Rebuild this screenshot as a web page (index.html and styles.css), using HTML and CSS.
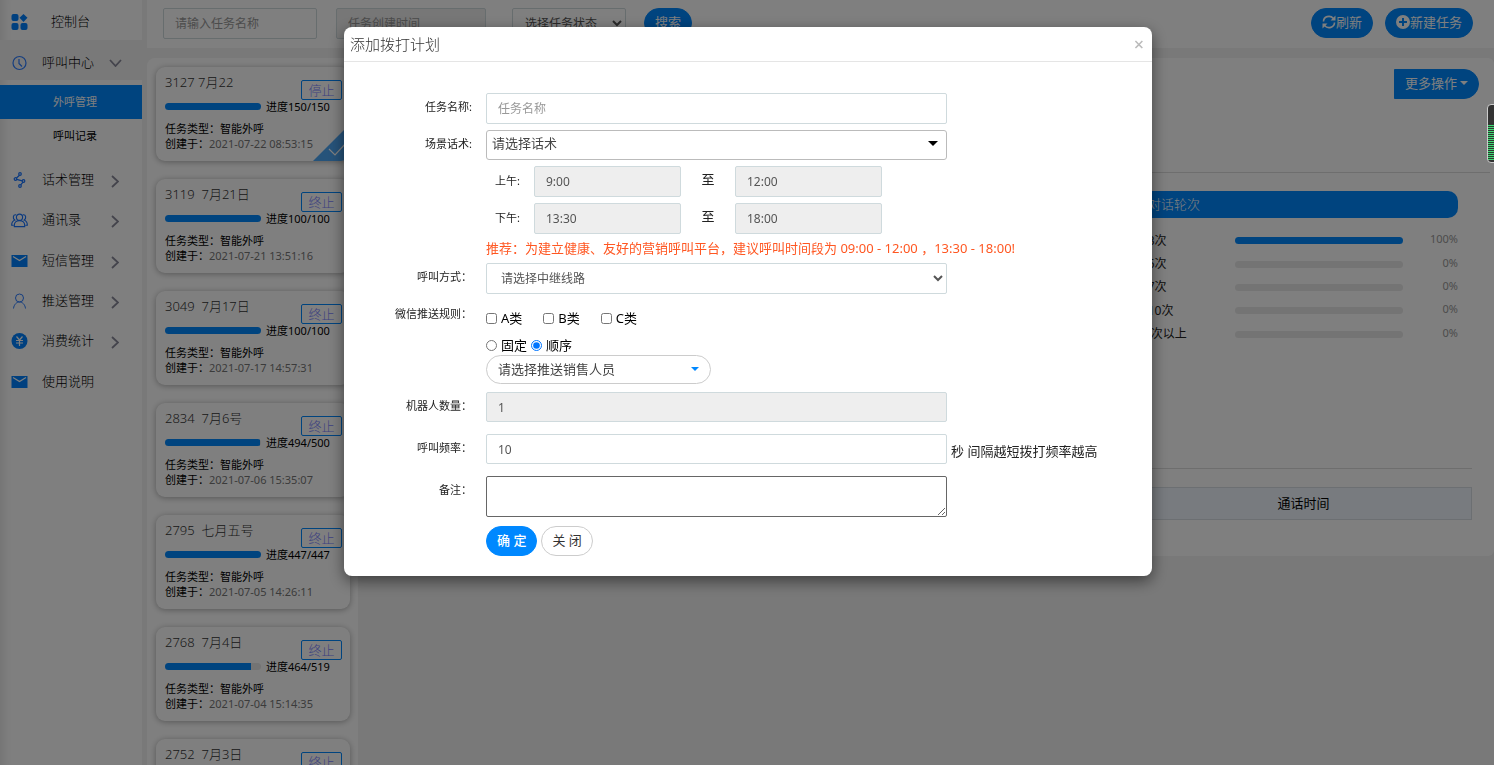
FILE: index.html
```html
<!DOCTYPE html>
<html lang="zh-CN">
<head>
<meta charset="utf-8">
<meta name="viewport" content="width=device-width, initial-scale=1">
<title>外呼管理</title>
<link rel="stylesheet" href="styles.css">
</head>
<body>
<svg class="sprite" aria-hidden="true">
  <symbol id="mail" viewBox="0 0 16 12"><path fill="#0080ff" d="M0 0h16v12H0z"/><path fill="none" stroke="#fff" stroke-width="1.2" d="M1.500 1.500 8 5.500l6.500-4"/></symbol>
  <symbol id="right" viewBox="0 0 8 13"><path fill="none" stroke="#889" stroke-width="1.800" d="m1 1 6 5.500-6 5.500"/></symbol>
</svg>
<div class="app">
  <nav class="sidebar">
    <a class="menu home" href="#"><svg class="icon" viewBox="0 0 16 16" fill="#0080ff"><rect width="7" height="7" rx="2"/><path d="m12 0 4 3.800L12 8 8 3.800z"/><rect y="9" width="7" height="7" rx="2"/><rect x="9" y="9" width="7" height="7" rx="2"/></svg><span>控制台</span></a>
    <a class="menu open" href="#"><svg class="icon" viewBox="0 0 16 16" fill="none" stroke="#2b7cff" stroke-width="1.200"><circle cx="8" cy="8" r="6.500"/><path d="M7.500 4v4.500l3 3"/></svg><span>呼叫中心</span><svg class="chev-down" viewBox="0 0 13 8"><path fill="none" stroke="#889" stroke-width="1.800" d="m1 1 5.500 6L12 1"/></svg></a>
    <div class="submenu">
      <a class="sub active" href="#">外呼管理</a>
      <a class="sub" href="#">呼叫记录</a>
    </div>
    <div class="group">
      <a class="menu" href="#"><svg class="icon" viewBox="0 0 16 16" fill="none" stroke="#1673ff" stroke-width="1.200"><circle cx="8.500" cy="2" r="1.300"/><circle cx="4" cy="7" r="1.300"/><circle cx="12" cy="9" r="1.300"/><circle cx="8.500" cy="14" r="1.300"/><path d="M8 3.200 5 6M5.200 7.300l5.500 1.500M11.500 10.200 9.200 12.800"/></svg><span>话术管理</span><svg class="chev"><use href="#right"/></svg></a>
      <a class="menu" href="#"><svg class="icon wide" viewBox="0 0 18 15" fill="none" stroke="#1673ff" stroke-width="1.200"><circle cx="9" cy="4" r="3.300"/><path d="M3.500 14v-1.500c0-6.500 11-6.500 11 0V14zM5.500 1.500C2 1 1.500 5.500 4 7c-2 .8-3.300 2.500-3.300 5.500h2M12.500 1.500C16 1 16.500 5.500 14 7c2 .8 3.300 2.500 3.300 5.500h-2"/></svg><span>通讯录</span><svg class="chev"><use href="#right"/></svg></a>
      <a class="menu" href="#"><svg class="icon mail"><use href="#mail"/></svg><span>短信管理</span><svg class="chev"><use href="#right"/></svg></a>
      <a class="menu" href="#"><svg class="icon" viewBox="0 0 16 16" fill="none" stroke="#2b7cff"><circle cx="8" cy="5" r="4"/><path d="M2 15.500C2.500 11.500 5 9 8 9s5.500 2.500 6 6.500"/></svg><span>推送管理</span><svg class="chev"><use href="#right"/></svg></a>
      <a class="menu" href="#"><svg class="icon" viewBox="0 0 16 16"><circle cx="8" cy="8" r="8" fill="#0080ff"/><path fill="none" stroke="#fff" stroke-width="1.200" d="m5 3.500 3 3.500 3-3.500M4.500 7.500h7M4.500 10h7M8 7v6"/></svg><span>消费统计</span><svg class="chev"><use href="#right"/></svg></a>
      <a class="menu" href="#"><svg class="icon mail"><use href="#mail"/></svg><span>使用说明</span></a>
    </div>
  </nav>
  <main class="main">
    <header class="topbar">
      <input class="field f-name" type="text" placeholder="请输入任务名称" aria-label="任务名称搜索">
      <input class="field f-date" type="text" placeholder="任务创建时间" aria-label="任务创建时间" readonly>
      <select class="field f-state" aria-label="任务状态"><option>选择任务状态</option></select>
      <button class="btn">搜索</button>
      <div class="actions">
        <button class="btn"><svg class="btn-icon" viewBox="0 0 14 14" fill="none" stroke="#fff" stroke-width="1.600"><path d="M1.500 6.500c0-5 6.500-7 10-3M12.500 7.500c0 5-6.500 7-10 3"/><path fill="#fff" stroke="none" d="M13.500 .5v5h-5zM.5 13.500v-5h5z"/></svg>刷新</button>
        <button class="btn"><svg class="btn-icon" viewBox="0 0 14 14"><circle cx="7" cy="7" r="7" fill="#fff"/><path stroke="#0088ff" stroke-width="2" d="M7 3v8M3 7h8"/></svg>新建任务</button>
      </div>
    </header>
    <div class="content">
      <section class="tasks">
        <article class="card selected">
          <h3>3127 7月22</h3><button class="stop">停止</button>
          <div class="progress"><div class="track"><div class="fill" style="width:100%"></div></div><span>进度150/150</span></div>
          <p>任务类型：智能外呼</p><p>创建于：<time>2021-07-22 08:53:15</time></p>
          <svg class="tick" viewBox="0 0 37 37"><path fill="#4da6f5" d="M37 0v37H0z"/><path fill="none" stroke="#fff" stroke-width="1.200" d="m16 25 6 6 12-13"/></svg>
        </article>
        <article class="card">
          <h3>3119&nbsp; 7月21日</h3><button class="stop">终止</button>
          <div class="progress"><div class="track"><div class="fill" style="width:100%"></div></div><span>进度100/100</span></div>
          <p>任务类型：智能外呼</p><p>创建于：<time>2021-07-21 13:51:16</time></p>
        </article>
        <article class="card">
          <h3>3049&nbsp; 7月17日</h3><button class="stop">终止</button>
          <div class="progress"><div class="track"><div class="fill" style="width:100%"></div></div><span>进度100/100</span></div>
          <p>任务类型：智能外呼</p><p>创建于：<time>2021-07-17 14:57:31</time></p>
        </article>
        <article class="card">
          <h3>2834&nbsp; 7月6号</h3><button class="stop">终止</button>
          <div class="progress"><div class="track"><div class="fill" style="width:98.8%"></div></div><span>进度494/500</span></div>
          <p>任务类型：智能外呼</p><p>创建于：<time>2021-07-06 15:35:07</time></p>
        </article>
        <article class="card">
          <h3>2795&nbsp; 七月五号</h3><button class="stop">终止</button>
          <div class="progress"><div class="track"><div class="fill" style="width:100%"></div></div><span>进度447/447</span></div>
          <p>任务类型：智能外呼</p><p>创建于：<time>2021-07-05 14:26:11</time></p>
        </article>
        <article class="card">
          <h3>2768&nbsp; 7月4日</h3><button class="stop">终止</button>
          <div class="progress"><div class="track"><div class="fill" style="width:89.4%"></div></div><span>进度464/519</span></div>
          <p>任务类型：智能外呼</p><p>创建于：<time>2021-07-04 15:14:35</time></p>
        </article>
        <article class="card">
          <h3>2752&nbsp; 7月3日</h3><button class="stop">终止</button>
        </article>
      </section>
      <section class="detail">
        <div class="detail-head"><button class="btn more">更多操作<i class="caret"></i></button></div>
        <div class="stats">
          <h2>对话轮次</h2>
          <dl>
            <div><dt>1-3次</dt><dd class="track"><div class="fill" style="width:100%"></div></dd><dd class="pct">100%</dd></div>
            <div><dt>4-5次</dt><dd class="track"></dd><dd class="pct">0%</dd></div>
            <div><dt>6-7次</dt><dd class="track"></dd><dd class="pct">0%</dd></div>
            <div><dt>8-10次</dt><dd class="track"></dd><dd class="pct">0%</dd></div>
            <div><dt>10次以上</dt><dd class="track"></dd><dd class="pct">0%</dd></div>
          </dl>
        </div>
        <div class="records">
          <table><thead><tr><td></td><th>通话时间</th></tr></thead></table>
        </div>
      </section>
    </div>
  </main>
</div>

<div class="overlay">
  <div class="modal" role="dialog" aria-labelledby="modal-title">
    <header class="modal-head">
      <h1 id="modal-title">添加拨打计划</h1>
      <button class="close" aria-label="关闭窗口">×</button>
    </header>
    <form class="form">
      <div class="row"><label class="lbl" for="name">任务名称:</label><input class="field full" id="name" type="text" placeholder="任务名称"></div>
      <div class="row"><label class="lbl" for="script">场景话术:</label><button class="picker full" id="script" type="button">请选择话术<i class="caret dark"></i></button></div>
      <div class="row times"><label for="am1">上午:</label><input class="field" id="am1" value="9:00" readonly><label class="to" for="am2">至</label><input class="field" id="am2" value="12:00" readonly></div>
      <div class="row times"><label for="pm1">下午:</label><input class="field" id="pm1" value="13:30" readonly><label class="to" for="pm2">至</label><input class="field" id="pm2" value="18:00" readonly></div>
      <p class="tip">推荐：为建立健康、友好的营销呼叫平台，建议呼叫时间段为 09:00 - 12:00 ，13:30 - 18:00!</p>
      <div class="row"><label class="lbl" for="line">呼叫方式：</label><select class="field full" id="line"><option>请选择中继线路</option></select></div>
      <div class="row rules"><span class="lbl">微信推送规则：</span>
        <div class="push">
          <div class="checks"><label><input type="checkbox">A类</label><label><input type="checkbox">B类</label><label><input type="checkbox">C类</label></div>
          <div class="radios"><label><input type="radio" name="order">固定</label><label><input type="radio" name="order" checked>顺序</label></div>
          <button class="pill" type="button">请选择推送销售人员<i class="caret blue"></i></button>
        </div>
      </div>
      <div class="row loose"><label class="lbl" for="robots">机器人数量：</label><input class="field full" id="robots" value="1" readonly></div>
      <div class="row loose"><label class="lbl" for="rate">呼叫频率：</label><input class="field full" id="rate" value="10"><span class="note">秒 间隔越短拨打频率越高</span></div>
      <div class="row memo"><label class="lbl" for="memo">备注：</label><textarea class="full" id="memo"></textarea></div>
      <div class="buttons"><button class="btn ok" type="button">确 定</button><button class="btn cancel" type="button">关 闭</button></div>
    </form>
  </div>
</div>
<div class="meter"></div>
</body>
</html>
```

FILE: styles.css
```css
* { box-sizing: border-box; }
body, h1, h2, h3, p, dl, dd { margin: 0; }
body {
  height: 100vh;
  overflow: hidden;
  background: #f2f2f2;
  color: #222;
  font: 400 13px/20px "Noto Sans", "Noto Sans CJK SC", sans-serif;
}
button, input, select, textarea { font: inherit; color: inherit; }
button { padding: 0; cursor: pointer; }
a { color: inherit; text-decoration: none; }
.sprite { position: absolute; width: 0; height: 0; }

.app { display: flex; gap: 5px; height: 100vh; }

/* sidebar */
.sidebar {
  flex: 0 0 142px;
  background: #fff;
  box-shadow: inset 12px 0 12px -10px rgba(0, 0, 0, .12);
}
.menu { display: flex; align-items: center; height: 40px; padding: 0 23px 0 11px; font-weight: 300; }
.menu span { flex: 1; margin-left: 14px; padding-bottom: 2px; color: #000; white-space: nowrap; }
.home { padding-top: 4px; }
.home span { margin-left: 23px; }
.icon { flex: none; width: 17px; height: 16px; }
.wide { height: 15px; }
.icon.mail { height: 12px; }
.chev { width: 8px; height: 13px; margin-top: 3px; }
.chev-down { width: 13px; height: 8px; margin-right: -3px; }
.open { background: #f2f2f2; padding-top: 6px; }
.submenu { padding: 5px 0 7px; }
.sub { display: block; padding-left: 53px; font-size: 11px; line-height: 34px; color: #000; }
.sub.active { background: #0088ff; color: #fff; }
.group { display: grid; grid-auto-rows: 1fr; height: 242px; }
.group .menu { height: auto; }

/* shared controls */
.field {
  height: 31px;
  padding: 0 11px;
  border: 1px solid #cfdadd;
  border-radius: 2px;
  background: #fff;
  color: #555;
  font-size: 12px;
  outline: none;
}
.field:read-only:not(select) { background: #eee; }
.field::placeholder { color: #999; opacity: 1; }
.btn {
  display: inline-flex;
  align-items: center;
  justify-content: center;
  height: 30px;
  padding: 0 10px 2px;
  border: 1px solid #0088ff;
  border-radius: 15px;
  background: #0088ff;
  color: #fff;
  white-space: nowrap;
}
.btn-icon { width: 14px; height: 14px; }
.caret { border: 4px solid transparent; border-top-color: currentColor; border-bottom: 0; }
.track { height: 7px; border-radius: 4px; background: #e8e8e8; overflow: hidden; }
.fill { height: 100%; background: #0088ff; }

/* toolbar */
.main { flex: 1; min-width: 0; display: flex; flex-direction: column; gap: 10px; }
.topbar { display: flex; align-items: flex-start; height: 48px; padding: 8px 21px 0 16px; background: #fff; }
.f-name { width: 154px; margin-right: 19px; }
.f-date { width: 150px; margin-right: 26px; }
.f-state { width: 114px; margin-right: 18px; padding: 0 0 0 8px; }
.actions { display: flex; gap: 12px; margin-left: auto; }

/* task list */
.content { flex: 1; min-height: 0; display: flex; gap: 10px; }
.tasks {
  flex: 0 0 211px;
  display: flex;
  flex-direction: column;
  gap: 18px;
  padding: 9px 8px 0 9px;
  border-radius: 8px 0 0 0;
  background: #fff;
  overflow: hidden;
}
.card {
  position: relative;
  flex: none;
  height: 94px;
  padding: 5px 9px;
  border-radius: 9px;
  box-shadow: 0 1px 6px rgba(0, 0, 0, .32);
  background: #fff;
  overflow: hidden;
}
.card h3 { font-size: 13px; font-weight: 300; line-height: 20px; color: #333; }
.stop {
  position: absolute;
  top: 13px;
  right: 8px;
  width: 41px;
  height: 20px;
  padding-bottom: 1px;
  border: 1px solid #0088ff;
  border-radius: 2px;
  background: none;
  color: #7b84ff;
  font-weight: 300;
  line-height: 18px;
}
.progress { display: flex; align-items: center; gap: 5px; height: 29px; padding-bottom: 1px; padding-top: 1px; font-size: 11px; color: #000; }
.progress .track { flex: 0 0 96px; }
.card p { font-size: 11px; line-height: 15px; color: #000; }
.card time { color: #777; }
.tick { position: absolute; right: 0; bottom: 0; width: 37px; height: 37px; }

/* detail panel */
.detail { flex: 1; align-self: flex-start; background: #fff; border-radius: 6px; padding-bottom: 36px; }
.detail-head {
  display: flex;
  justify-content: flex-end;
  align-items: flex-start;
  height: 115px;
  margin-right: 4px;
  padding: 11px 11px 0;
  border-bottom: 1px solid #ddd;
}
.more { border-radius: 0 15px 15px 0; gap: 3px; }
.stats { width: 336px; height: 295px; margin: 0 36px 0 auto; padding-top: 18px; }
.stats h2 { padding-left: 26px; border-radius: 10px; background: #0088ff; color: #fff; font-size: 13px; font-weight: 300; line-height: 27px; }
.stats dl { display: grid; grid-auto-rows: 1fr; height: 117px; margin-top: 11px; }
.stats dl div:not(.fill) { display: grid; grid-template-columns: 113px 168px 1fr; align-items: center; }
.stats dt { padding-left: 15px; font-size: 12px; }
.pct { padding-bottom: 3px; text-align: right; font-size: 11px; color: #999; }
.records { margin: 0 22px; padding-top: 18px; border-top: 1px solid #ddd; }
.records table { width: 100%; border-collapse: collapse; }
.records th, .records td { height: 32px; padding: 0 0 2px; border: 1px solid #d8dfe5; background: #f0f7ff; font-weight: 400; color: #000; }
.records th { width: 336px; }

/* dialog */
.overlay { position: fixed; inset: 0; padding: 27px 0 0 2px; background: rgba(0, 0, 0, .5); }
.modal {
  width: 808px;
  max-width: 100%;
  margin: 0 auto;
  border-radius: 8px;
  background: #fff;
  box-shadow: 0 5px 15px rgba(0, 0, 0, .5);
}
.modal-head { display: flex; justify-content: space-between; height: 35px; padding: 0 8px 0 6px; border-bottom: 1px solid #e5e5e5; }
.modal-head h1 { font-size: 15px; font-weight: 300; line-height: 34px; color: #333; }
.close { border: 0; background: none; color: #bbb; font-size: 18px; font-weight: 500; line-height: 28px; }
.form { padding: 31px 20px 20px 0; }
.row { display: flex; margin-bottom: 6px; }
.lbl { flex: 0 0 128px; margin-right: 14px; text-align: right; font-size: 11px; line-height: 27px; }
.full { flex: 0 0 461px; }
.picker {
  display: flex;
  align-items: center;
  justify-content: space-between;
  height: 30px;
  padding: 0 8px 4px 5px;
  border: 1px solid #bbb;
  border-radius: 3px;
  background: #fff;
  color: #444;
}
.caret.dark { border-width: 5px; border-bottom: 0; color: #000; }
.caret.blue { color: #0088ff; }
.times { padding-left: 151px; font-size: 11px; line-height: 29px; }
.times label { width: 39px; }
.times .field { width: 147px; }
.times .to { width: 54px; text-align: center; font-size: 13px; line-height: 27px; }
.tip { margin: -6px 0 0 142px; font-size: 13px; line-height: 29px; color: #ff5722; white-space: nowrap; }
select#line { padding: 0 0 0 10px; }
.rules { margin-bottom: 8px; }
.push { flex: 1; color: #000; }
.push label { display: inline-flex; align-items: center; gap: 4px; }
.push input { width: 11px; height: 11px; margin: 0; accent-color: #0075ff; }
.checks { display: flex; gap: 21px; height: 36px; padding: 4px 0 4px; }
.radios { display: flex; gap: 4px; height: 19px; padding-bottom: 1px; }
.pill {
  display: flex;
  align-items: center;
  justify-content: space-between;
  width: 225px;
  height: 29px;
  padding: 0 11px 2px;
  border: 1px solid #ccc;
  border-radius: 15px;
  background: #fff;
  color: #444;
}
.loose { margin-bottom: 12px; }
.loose .field { height: 30px; }
.note { margin-left: 4px; padding-top: 7px; white-space: nowrap; }
.loose:has(.note) { height: 30px; }
.memo { margin-bottom: 9px; }
.memo textarea { height: 41px; border: 1px solid #666; border-radius: 2px; }
.buttons { display: flex; gap: 4px; padding-left: 142px; }
.ok { font-weight: 500; }
.cancel { border-color: #ccc; background: #fff; color: #333; }

/* level meter docked at the window edge */
.meter {
  position: fixed;
  top: 104px;
  right: -4px;
  width: 11px;
  height: 59px;
  border: 1px solid #ccc;
  border-radius: 4px;
  background: repeating-linear-gradient(#3ddc74 0 1px, #333 1px 2px) 0 20px / 100% 36px no-repeat #333;
}
```
